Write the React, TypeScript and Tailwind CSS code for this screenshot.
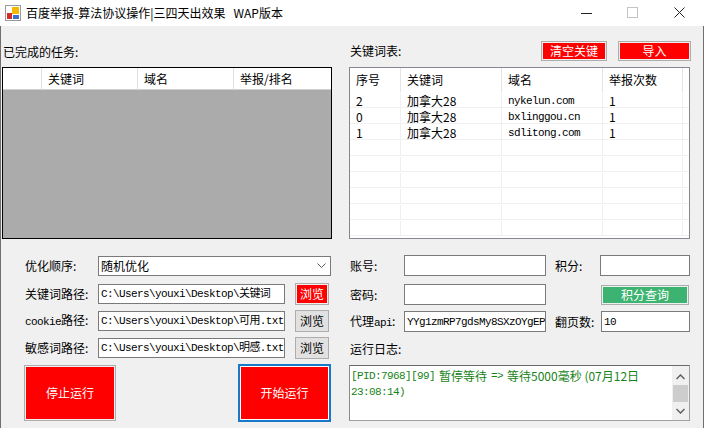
import React from "react"

const rows = [
  { id: "2", kw: "加拿大28", domain: "nykelun.com", n: "1" },
  { id: "0", kw: "加拿大28", domain: "bxlinggou.cn", n: "1" },
  { id: "1", kw: "加拿大28", domain: "sdlitong.com", n: "1" },
]

function AppIcon() {
  return (
    <svg width="16" height="16" viewBox="0 0 16 16">
      <rect x="0.5" y="0.5" width="15" height="15" fill="#fff" stroke="#9a9a9a" />
      <rect x="7" y="2" width="7" height="7" fill="#f5b800" />
      <rect x="2" y="8" width="5" height="6" fill="#d22b2b" />
      <rect x="8" y="10" width="6" height="4" fill="#3b6fd0" />
    </svg>
  )
}

function RedBtn({ label, className }: { label: string; className: string }) {
  return (
    <div className={`border border-[#adadad] bg-[#f4eeee] p-px ${className}`}>
      <div className="flex h-full w-full items-center justify-center bg-[#ff0000] text-white">{label}</div>
    </div>
  )
}

function GrayBtn({ label }: { label: string }) {
  return (
    <div className="flex h-[22px] w-[34px] items-center justify-center border border-[#adadad] bg-[#e1e1e1]">{label}</div>
  )
}

function PathRow({ label, value, red }: { label: React.ReactNode; value: string; red?: boolean }) {
  return (
    <div className="flex h-[22px] items-center pl-[24px]">
      <div className="w-[73px] whitespace-nowrap">{label}</div>
      <div className="flex h-[20px] w-[187px] items-center overflow-hidden whitespace-nowrap border border-[#7a7a7a] bg-white pl-[2px] font-['Liberation_Mono','Noto_Sans_CJK_SC',monospace] text-[11px] tracking-[-0.6px]">
        {value}
      </div>
      <div className="ml-[10px]">
        {red ? <RedBtn label="浏览" className="h-[22px] w-[34px]" /> : <GrayBtn label="浏览" />}
      </div>
    </div>
  )
}

export default function App() {
  return (
    <div className="h-[428px] w-[704px] overflow-hidden bg-[#f0f0f0] font-['Noto_Sans_CJK_SC',sans-serif] text-[12px] leading-[16px] text-black">
      {/* title bar */}
      <div className="flex h-[26px] items-center bg-white">
        <div className="ml-[5px]">
          <AppIcon />
        </div>
        <div className="ml-[5px] whitespace-pre text-[12px]">百度举报-算法协议操作|三四天出效果   WAP版本</div>
        <div className="ml-auto flex items-center">
          <svg width="12" height="12" viewBox="0 0 12 12" className="mr-[34px]">
            <line x1="0" y1="6.5" x2="11" y2="6.5" stroke="#222" strokeWidth="1" />
          </svg>
          <svg width="12" height="12" viewBox="0 0 12 12" className="mr-[35px]">
            <rect x="0.5" y="0.5" width="10" height="10" fill="none" stroke="#c4c4c4" />
          </svg>
          <svg width="12" height="12" viewBox="0 0 12 12" className="mr-[18px]">
            <path d="M0.5 0.5 L10.5 10.5 M10.5 0.5 L0.5 10.5" stroke="#222" strokeWidth="1" />
          </svg>
        </div>
      </div>

      <div className="flex h-[402px] border-x border-[#6f6f6f]">
        {/* left column */}
        <div className="flex w-[339px] flex-col">
          <div className="ml-[2px] mt-[18px]">已完成的任务:</div>
          <div className="ml-[1px] mt-[7px] flex h-[172px] w-[330px] flex-col border border-black bg-[#ababab]">
            <div className="grid h-[22px] grid-cols-[39px_96px_96px_1fr] border-b border-[#d0d0d0] bg-white">
              <div className="border-r border-[#e0e0e0]" />
              <div className="flex items-center border-r border-[#e0e0e0] pl-[6px]">关键词</div>
              <div className="flex items-center border-r border-[#e0e0e0] pl-[6px]">域名</div>
              <div className="flex items-center pl-[6px]">举报/排名</div>
            </div>
          </div>

          <div className="mt-[17px] flex h-[20px] items-center pl-[24px]">
            <div className="w-[73px]">优化顺序:</div>
            <div className="flex h-[20px] w-[233px] items-center border border-[#7a7a7a] bg-white pl-[2px]">
              <span>随机优化</span>
              <svg width="9" height="6" viewBox="0 0 9 6" className="ml-auto mr-[4px]">
                <path d="M0.5 0.5 L4.5 4.5 L8.5 0.5" fill="none" stroke="#555" strokeWidth="1" />
              </svg>
            </div>
          </div>
          <div className="mt-[7px]">
            <PathRow label="关键词路径:" value={"C:\\Users\\youxi\\Desktop\\关键词"} red />
          </div>
          <div className="mt-[5px]">
            <PathRow
              label={
                <>
                  <span className="font-['Liberation_Mono',monospace] text-[11px] tracking-[-0.6px]">cookie</span>路径:
                </>
              }
              value={"C:\\Users\\youxi\\Desktop\\可用.txt"}
            />
          </div>
          <div className="mt-[5px]">
            <PathRow label="敏感词路径:" value={"C:\\Users\\youxi\\Desktop\\明感.txt"} />
          </div>

          <div className="mt-[5px] flex items-start pl-[23px]">
            <RedBtn label="停止运行" className="mt-px h-[56px] w-[92px]" />
            <div className="ml-[122px] h-[58px] w-[93px] border-2 border-[#1979c9] bg-white p-px">
              <div className="flex h-full w-full items-center justify-center bg-[#ff0000] text-white">开始运行</div>
            </div>
          </div>
        </div>

        {/* right column */}
        <div className="flex flex-1 flex-col">
          <div className="mt-[15px] flex h-[20px] items-center pl-[10px] pr-[12px]">
            <div>关键词表:</div>
            <RedBtn label="清空关键" className="ml-auto h-[20px] w-[66px]" />
            <RedBtn label="导入" className="ml-[11px] h-[20px] w-[73px]" />
          </div>

          <div className="ml-[9px] mt-[6px] h-[172px] w-[341px] overflow-hidden border border-[#828790] bg-white">
            <div className="grid h-[24px] grid-cols-[51px_101px_101px_80px_1fr]">
              <div className="flex items-center border-r border-[#e5e5e5] pl-[6px]">序号</div>
              <div className="flex items-center border-r border-[#e5e5e5] pl-[6px]">关键词</div>
              <div className="flex items-center border-r border-[#e5e5e5] pl-[6px]">域名</div>
              <div className="flex items-center border-r border-[#e5e5e5] pl-[6px]">举报次数</div>
              <div />
            </div>
            {Array.from({ length: 9 }).map((_, i) => {
              const r = rows[i]
              return (
                <div key={i} className="grid h-[16px] grid-cols-[51px_101px_101px_80px_1fr] border-b border-[#f0f0f0] pt-px">
                  <div className="flex items-center border-r border-[#f0f0f0] pl-[6px]">{r?.id}</div>
                  <div className="flex items-center border-r border-[#f0f0f0] pl-[6px]">{r?.kw}</div>
                  <div className="flex items-center border-r border-[#f0f0f0] pl-[6px] font-['Liberation_Mono',monospace] text-[11px] tracking-[-0.6px]">
                    {r?.domain}
                  </div>
                  <div className="flex items-center border-r border-[#f0f0f0] pl-[6px]">{r?.n}</div>
                  <div />
                </div>
              )
            })}
          </div>

          <div className="mt-[16px] flex h-[21px] items-center pl-[10px]">
            <div className="w-[54px]">账号:</div>
            <div className="h-[21px] w-[142px] border border-[#7a7a7a] bg-white" />
            <div className="ml-[9px] w-[45px]">积分:</div>
            <div className="h-[21px] w-[90px] border border-[#7a7a7a] bg-white" />
          </div>
          <div className="mt-[8px] flex h-[21px] items-center pl-[10px]">
            <div className="w-[54px]">密码:</div>
            <div className="h-[21px] w-[142px] border border-[#7a7a7a] bg-white" />
            <div className="ml-[55px] h-[20px] w-[88px] border border-[#adadad] bg-[#eef2ee] p-px">
              <div className="flex h-full w-full items-center justify-center bg-[#3cb371] text-white">积分查询</div>
            </div>
          </div>
          <div className="mt-[6px] flex h-[21px] items-center pl-[10px]">
            <div className="w-[54px] whitespace-nowrap">
              代理<span className="font-['Liberation_Mono',monospace] text-[11px] tracking-[-0.6px]">api</span>:
            </div>
            <div className="flex h-[21px] w-[142px] items-center overflow-hidden whitespace-nowrap border border-[#7a7a7a] bg-white pl-[2px] font-['Liberation_Mono',monospace] text-[11px] tracking-[-0.6px]">
              YYg1zmRP7gdsMy8SXzOYgEP
            </div>
            <div className="ml-[9px] w-[46px]">翻页数:</div>
            <div className="flex h-[21px] w-[89px] items-center border border-[#7a7a7a] bg-white pl-[2px] font-['Liberation_Mono',monospace] text-[11px] tracking-[-0.6px]">
              10
            </div>
          </div>
          <div className="mt-[9px] pl-[10px]">运行日志:</div>

          <div className="ml-[9px] mt-[8px] flex h-[56px] w-[341px] border border-[#a0a0a0] border-t-[#6a6a6a] border-l-[#8a8a8a] bg-white">
            <div className="flex flex-1 flex-col pl-[1px] pt-[2px] text-[#178317]">
              <div className="flex h-[16px] items-center whitespace-nowrap">
                <span className="font-['Liberation_Mono',monospace] text-[11px] tracking-[-0.6px]">[PID:7968][99]</span>
                <span className="ml-[4px]">暂停等待</span>
                <span className="ml-[4px] font-['Liberation_Mono',monospace] text-[11px] tracking-[-0.6px]">=&gt;</span>
                <span className="ml-[4px]">等待5000毫秒 (07月12日</span>
              </div>
              <div className="flex h-[16px] items-center">
                <span className="font-['Liberation_Mono',monospace] text-[11px] tracking-[-0.6px]">23:08:14)</span>
              </div>
            </div>
            <div className="flex w-[17px] flex-col items-center bg-[#f0f0f0]">
              <svg width="9" height="6" viewBox="0 0 9 6" className="mt-[8px]">
                <path d="M0.5 5 L4.5 1 L8.5 5" fill="none" stroke="#606060" strokeWidth="1.5" />
              </svg>
              <div className="mt-[5px] h-[17px] w-[15px] bg-[#cdcdcd]" />
              <svg width="9" height="6" viewBox="0 0 9 6" className="mt-[6px]">
                <path d="M0.5 1 L4.5 5 L8.5 1" fill="none" stroke="#606060" strokeWidth="1.5" />
              </svg>
            </div>
          </div>
        </div>
      </div>
    </div>
  )
}
